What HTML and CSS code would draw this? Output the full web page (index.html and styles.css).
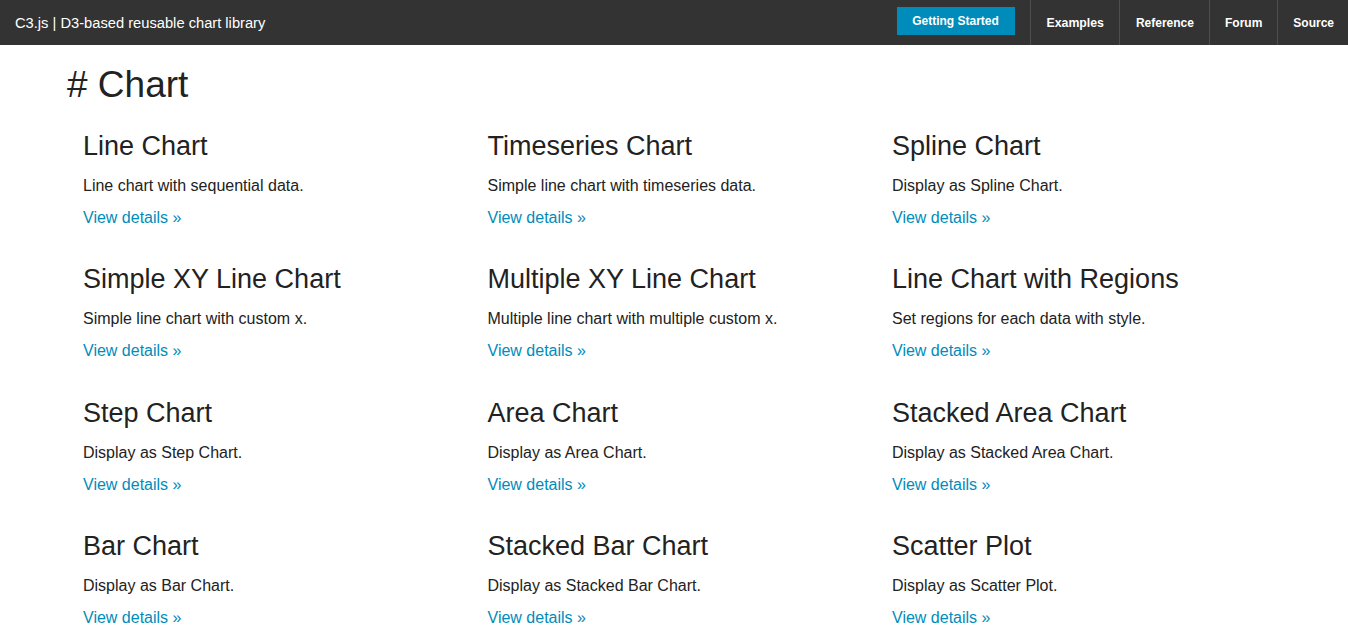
FILE: index.html
```html
<!DOCTYPE html>
<html>
<head>
<meta charset="utf-8">
<title>C3.js | D3-based reusable chart library</title>
<link rel="stylesheet" href="styles.css">
</head>
<body>
<nav class="topbar">
  <a class="brand" href="#">C3.js | D3-based reusable chart library</a>
  <div class="nav-right">
    <a class="btn-start" href="#">Getting Started</a>
    <a class="nav-item nav-wide" href="#">Examples</a>
    <a class="nav-item nav-pad" href="#">Reference</a>
    <a class="nav-item" href="#">Forum</a>
    <a class="nav-item" href="#">Source</a>
  </div>
</nav>
<main class="content">
  <h1 class="section-title"># Chart</h1>
  <div class="grid">
    <div class="item"><h2>Line Chart</h2><p>Line chart with sequential data.</p><a href="#">View details »</a></div>
    <div class="item"><h2>Timeseries Chart</h2><p>Simple line chart with timeseries data.</p><a href="#">View details »</a></div>
    <div class="item"><h2>Spline Chart</h2><p>Display as Spline Chart.</p><a href="#">View details »</a></div>
    <div class="item"><h2>Simple XY Line Chart</h2><p>Simple line chart with custom x.</p><a href="#">View details »</a></div>
    <div class="item"><h2>Multiple XY Line Chart</h2><p>Multiple line chart with multiple custom x.</p><a href="#">View details »</a></div>
    <div class="item"><h2>Line Chart with Regions</h2><p>Set regions for each data with style.</p><a href="#">View details »</a></div>
    <div class="item"><h2>Step Chart</h2><p>Display as Step Chart.</p><a href="#">View details »</a></div>
    <div class="item"><h2>Area Chart</h2><p>Display as Area Chart.</p><a href="#">View details »</a></div>
    <div class="item"><h2>Stacked Area Chart</h2><p>Display as Stacked Area Chart.</p><a href="#">View details »</a></div>
    <div class="item"><h2>Bar Chart</h2><p>Display as Bar Chart.</p><a href="#">View details »</a></div>
    <div class="item"><h2>Stacked Bar Chart</h2><p>Display as Stacked Bar Chart.</p><a href="#">View details »</a></div>
    <div class="item"><h2>Scatter Plot</h2><p>Display as Scatter Plot.</p><a href="#">View details »</a></div>
  </div>
</main>
</body>
</html>
```
FILE: styles.css
```css
html, body {
  margin: 0;
  padding: 0;
  background: #ffffff;
  color: #222222;
  font-family: "Liberation Sans", Arial, sans-serif;
}

a {
  text-decoration: none;
}

.topbar {
  height: 45px;
  background: #333333;
  display: flex;
  align-items: stretch;
  justify-content: space-between;
}

.brand {
  display: flex;
  align-items: center;
  padding-left: 15px;
  color: #ffffff;
  font-size: 14.7px;
}

.nav-right {
  display: flex;
  align-items: stretch;
}

.btn-start {
  align-self: center;
  margin-top: -3px;
  margin-right: 15px;
  height: 28px;
  width: 118px;
  display: flex;
  align-items: center;
  justify-content: center;
  background: #008cba;
  color: #ffffff;
  font-size: 12px;
  font-weight: bold;
}

.nav-item {
  display: flex;
  align-items: center;
  padding: 0 15px 0 15px;
  border-left: 1px solid #4e4e4e;
  color: #ffffff;
  font-size: 12px;
  font-weight: bold;
}

.nav-wide {
  padding: 0 15px 0 16px;
  font-size: 12.3px;
}

.nav-pad {
  padding: 0 15px 0 16px;
}

.nav-item:last-child {
  padding-right: 14px;
}

.content {
  padding: 18px 0 0 67px;
}

.section-title {
  margin: 0;
  font-size: 37px;
  line-height: 43px;
  font-weight: normal;
  color: #222222;
}

.grid {
  margin-top: 24px;
  padding-left: 16px;
  display: grid;
  grid-template-columns: repeat(3, 404.5px);
  row-gap: 33.3px;
}

.item h2 {
  margin: 0 0 12px 0;
  font-size: 27px;
  line-height: 32px;
  font-weight: normal;
  color: #222222;
}

.item p {
  margin: 0 0 8px 0;
  font-size: 16px;
  line-height: 24px;
}

.item a {
  display: block;
  font-size: 16px;
  line-height: 24px;
  color: #008cba;
}
```
